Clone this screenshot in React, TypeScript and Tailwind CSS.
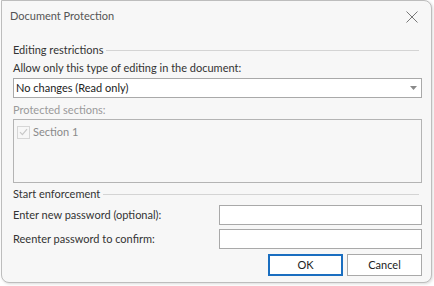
import React from 'react';

const font = { fontFamily: 'Lato, "Noto Sans", sans-serif' };

const GroupHeader: React.FC<{ title: string }> = ({ title }) => (
  <div className="flex items-center h-4 mr-[3px]">
    <span className="text-[11px] leading-4 text-[#333]">{title}</span>
    <div className="flex-1 ml-[3px] border-t border-[#d4d4d4]" />
  </div>
);

const App: React.FC = () => {
  return (
    <div className="w-[434px] h-[286px] bg-white overflow-hidden" style={font}>
      <div className="ml-[1px] w-[431px] h-[283px] bg-[#f7f7f7] border border-[#bdbdbd] rounded-r-lg rounded-bl-lg shadow-[1px_1px_3px_rgba(0,0,0,0.15)] flex flex-col">
        {/* Title bar */}
        <div className="h-[31px] flex items-center justify-between pl-[8px] pr-[13px]">
          <span className="text-[11px] text-[#555]">Document Protection</span>
          <svg width="12" height="12" viewBox="0 0 12 12" className="text-[#777]">
            <path d="M0.5 0.5 L11.5 11.5 M11.5 0.5 L0.5 11.5" stroke="currentColor" strokeWidth="1" />
          </svg>
        </div>

        <div className="flex flex-col pl-[11px] pr-[9px] pt-[10px]">
          <GroupHeader title="Editing restrictions" />
          <div className="mt-[2px] text-[11px] leading-4 text-[#333]">
            Allow only this type of editing in the document:
          </div>
          <div className="mt-[2px] h-[20px] bg-white border border-[#a9a9a9] flex items-center justify-between pl-[2px] pr-[4px]">
            <span className="text-[11px] text-[#222]">No changes (Read only)</span>
            <svg width="7" height="4" viewBox="0 0 7 4">
              <path d="M0 0 H7 L3.5 4 Z" fill="#8a8a8a" />
            </svg>
          </div>
          <div className="mt-[4px] text-[11px] leading-4 text-[#9a9a9a]">Protected sections:</div>
          <div className="mt-[1px] h-[64px] border border-[#b4b4b4] pt-[4px] pl-[3px]">
            <div className="flex items-center gap-[3px]">
              <div className="w-[13px] h-[13px] border border-[#d6d6d6] bg-[#f7f7f7] flex items-center justify-center">
                <svg width="9" height="8" viewBox="0 0 9 8">
                  <path d="M1 4.2 L3.4 6.6 L8 1.2" fill="none" stroke="#c8c8c8" strokeWidth="1.2" />
                </svg>
              </div>
              <span className="text-[11px] leading-4 text-[#8a8a8a]">Section 1</span>
            </div>
          </div>
          <div className="mt-[3px]">
            <GroupHeader title="Start enforcement" />
          </div>
          <div className="mt-[3px] flex items-center justify-between">
            <span className="text-[11px] text-[#333]">Enter new password (optional):</span>
            <div className="w-[203px] h-[20px] bg-white border border-[#a9a9a9]" />
          </div>
          <div className="mt-[4px] flex items-center justify-between">
            <span className="text-[11px] text-[#333]">Reenter password to confirm:</span>
            <div className="w-[203px] h-[20px] bg-white border border-[#a9a9a9]" />
          </div>
          <div className="mt-[5px] flex justify-end gap-[4px]">
            <button className="w-[75px] h-[22px] bg-white border-2 border-[#1a6ec0] text-[11px] text-[#222]">
              OK
            </button>
            <button className="w-[75px] h-[22px] bg-white border border-[#a9a9a9] text-[11px] text-[#222]">
              Cancel
            </button>
          </div>
        </div>
      </div>
    </div>
  );
};

export default App;
